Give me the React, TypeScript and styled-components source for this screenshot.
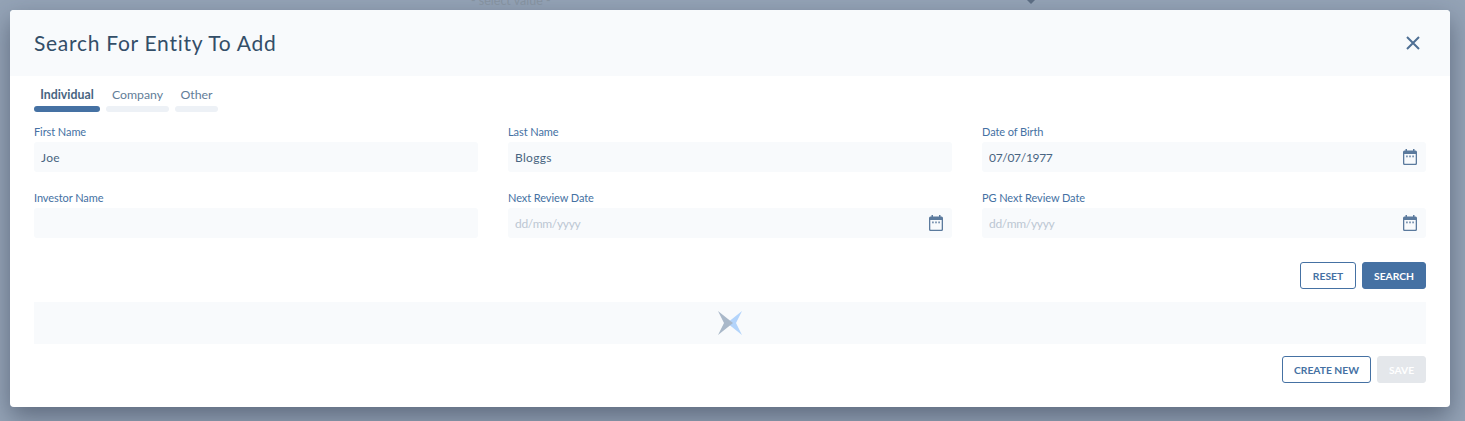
import React from "react";
import styled, { createGlobalStyle } from "styled-components";

interface Field {
    label: string;
    value?: string;
    placeholder?: string;
    date?: boolean;
}

const GlobalStyle = createGlobalStyle`
    html, body {
        margin: 0;
        padding: 0;
        height: 100%;
        overflow: hidden;
        background: #94a3b6;
    }
    body {
        font-family: "Lato", "Open Sans", sans-serif;
    }
`;

const Backdrop = styled.div`
    position: relative;
    box-sizing: border-box;
    width: 1465px;
    height: 421px;
    padding: 10px 15px 14px 10px;
    background: #94a3b6;
`;

const BehindText = styled.span`
    position: absolute;
    left: 471px;
    top: -6px;
    font-size: 12.5px;
    line-height: 14px;
    color: #84919f;
`;

const BehindCaret = styled.span`
    position: absolute;
    left: 1027px;
    top: 0;
    width: 0;
    height: 0;
    border-left: 4px solid transparent;
    border-right: 4px solid transparent;
    border-top: 4px solid #5b6c82;
`;

const Modal = styled.div`
    position: relative;
    height: 397px;
    background: #fff;
    border-radius: 4px;
    overflow: hidden;
`;

const ModalShadow = styled.div`
    border-radius: 4px;
    box-shadow: 0 10px 25px rgba(30, 41, 59, 0.45);
`;

const Header = styled.header`
    display: flex;
    align-items: center;
    justify-content: space-between;
    height: 66px;
    padding: 0 30px 0 24px;
    background: #f8fafc;
`;

const Title = styled.h2`
    margin: 0 0 1px;
    font-family: "Lato", sans-serif;
    font-size: 21px;
    font-weight: 400;
    letter-spacing: 0.72px;
    color: #334e68;
`;

const CloseButton = styled.button`
    display: flex;
    padding: 0;
    border: 0;
    background: none;
    color: #4f6f94;
`;

const Body = styled.div`
    padding: 12px 24px 0;
`;

const Tabs = styled.div`
    display: grid;
    grid-template-columns: 66px 63px 43px;
    column-gap: 6px;
    margin-bottom: 13px;
`;

const Tab = styled.div<{ $active?: boolean }>`
    font-size: 12.3px;
    line-height: 14px;
    font-weight: ${({ $active }) => ($active ? 700 : 400)};
    color: ${({ $active }) => ($active ? "#486581" : "#627d98")};
    text-align: center;

    &::after {
        content: "";
        display: block;
        height: 6px;
        margin-top: 4px;
        border-radius: 3px;
        background: ${({ $active }) => ($active ? "#4571a3" : "#edf1f6")};
    }
`;

const FieldGrid = styled.div`
    display: grid;
    grid-template-columns: repeat(3, 444px);
    column-gap: 30px;
    row-gap: 19px;
`;

const FieldBox = styled.label`
    display: block;
`;

const FieldLabel = styled.div`
    height: 17px;
    font-size: 11px;
    line-height: 14px;
    letter-spacing: -0.08px;
    color: #4571a3;
`;

const InputWrap = styled.div`
    display: flex;
    align-items: center;
    height: 30px;
    padding: 0 9px 0 7px;
    border-radius: 3px;
    background: #f8fafc;
`;

const Input = styled.input<{ $date?: boolean }>`
    flex: 1;
    min-width: 0;
    padding: 0;
    border: 0;
    outline: 0;
    background: transparent;
    font-family: inherit;
    font-size: 12px;
    letter-spacing: ${({ $date }) => ($date ? "-0.3px" : "0.3px")};
    color: #486581;

    &::placeholder {
        color: #bcc7d3;
        opacity: 1;
    }
`;

const ButtonRow = styled.div<{ $top: number }>`
    display: flex;
    justify-content: flex-end;
    gap: 6px;
    margin-top: ${({ $top }) => $top}px;
`;

const Button = styled.button<{ $variant: "outline" | "solid" | "disabled"; $width: number }>`
    box-sizing: border-box;
    width: ${({ $width }) => $width}px;
    height: 27px;
    padding: 0;
    border-radius: 3px;
    border: 1px solid ${({ $variant }) =>
        $variant === "disabled" ? "#e4e7eb" : "#4571a3"};
    background: ${({ $variant }) =>
        $variant === "outline" ? "#fff" : $variant === "solid" ? "#4571a3" : "#e4e7eb"};
    color: ${({ $variant }) => ($variant === "outline" ? "#4571a3" : "#fff")};
    font-family: inherit;
    font-size: 10.3px;
    font-weight: 700;
`;

const ResultPanel = styled.div`
    display: flex;
    align-items: center;
    justify-content: center;
    height: 42px;
    margin-top: 13px;
    background: #f8fafc;
`;

const CloseIcon = () => (
    <svg width="14" height="14" viewBox="0 0 14 14" fill="none" stroke="currentColor" strokeWidth="2">
        <path d="M1 1l12 12M13 1L1 13" />
    </svg>
);

const CalendarIcon = () => (
    <svg width="14" height="16" viewBox="0 0 14 16">
        <path
            fill="#5b7a9d"
            d="M2.5 0h1.5v1.5h6V0h1.5v1.5h1a1.5 1.5 0 0 1 1.5 1.5v11.5a1.5 1.5 0 0 1-1.5 1.5h-11A1.5 1.5 0 0 1 0 14.5V3a1.5 1.5 0 0 1 1.5-1.5h1z"
        />
        <rect x="1.3" y="5" width="11.4" height="9.7" rx="0.4" fill="#f8fafc" />
        <rect x="3" y="6.5" width="1.8" height="1.8" fill="#7d96b2" />
        <rect x="6.1" y="6.5" width="1.8" height="1.8" fill="#7d96b2" />
        <rect x="9.2" y="6.5" width="1.8" height="1.8" fill="#7d96b2" />
    </svg>
);

const LoaderMark = () => (
    <svg width="24" height="24" viewBox="0 0 24 24">
        <path fill="#b3d4fb" d="M24 0L18 12l6 12L9 12z" />
        <path fill="#a9b8c9" d="M0 0l15 12L0 24l6-12z" />
    </svg>
);

const fields: Field[] = [
    { label: "First Name", value: "Joe" },
    { label: "Last Name", value: "Bloggs" },
    { label: "Date of Birth", value: "07/07/1977", date: true },
    { label: "Investor Name" },
    { label: "Next Review Date", placeholder: "dd/mm/yyyy", date: true },
    { label: "PG Next Review Date", placeholder: "dd/mm/yyyy", date: true },
];

const App: React.FC = () => (
    <Backdrop>
        <GlobalStyle />
        <BehindText>- select value -</BehindText>
        <BehindCaret />
        <ModalShadow>
            <Modal>
                <Header>
                    <Title>Search For Entity To Add</Title>
                    <CloseButton>
                        <CloseIcon />
                    </CloseButton>
                </Header>
                <Body>
                    <Tabs>
                        <Tab $active>Individual</Tab>
                        <Tab>Company</Tab>
                        <Tab>Other</Tab>
                    </Tabs>
                    <FieldGrid>
                        {fields.map((field) => (
                            <FieldBox key={field.label}>
                                <FieldLabel>{field.label}</FieldLabel>
                                <InputWrap>
                                    <Input
                                        readOnly
                                        $date={field.date}
                                        value={field.value ?? ""}
                                        placeholder={field.placeholder}
                                    />
                                    {field.date && <CalendarIcon />}
                                </InputWrap>
                            </FieldBox>
                        ))}
                    </FieldGrid>
                    <ButtonRow $top={24}>
                        <Button $variant="outline" $width={56}>RESET</Button>
                        <Button $variant="solid" $width={64}>SEARCH</Button>
                    </ButtonRow>
                    <ResultPanel>
                        <LoaderMark />
                    </ResultPanel>
                    <ButtonRow $top={12}>
                        <Button $variant="outline" $width={89}>CREATE NEW</Button>
                        <Button $variant="disabled" $width={49}>SAVE</Button>
                    </ButtonRow>
                </Body>
            </Modal>
        </ModalShadow>
    </Backdrop>
);

export default App;
